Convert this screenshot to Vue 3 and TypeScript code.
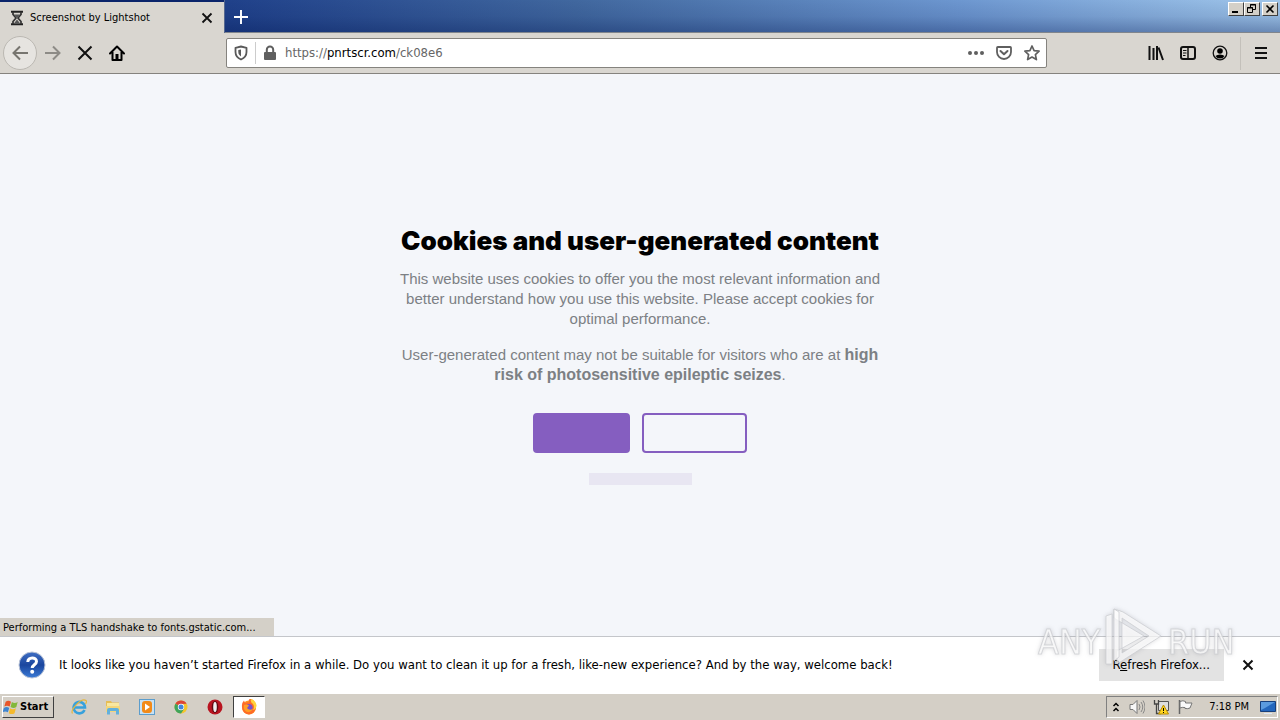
<script setup lang="ts">
interface Launcher {
  id: string
  label: string
  active: boolean
}

const launchers: Launcher[] = [
  { id: 'ie', label: 'Internet Explorer', active: false },
  { id: 'explorer', label: 'Windows Explorer', active: false },
  { id: 'media', label: 'Media Player', active: false },
  { id: 'chrome', label: 'Chrome', active: false },
  { id: 'opera', label: 'Opera', active: false },
  { id: 'firefox', label: 'Firefox', active: true },
]
</script>

<template>
  <div class="desktop">
    <header class="titlebar">
      <div class="tab">
        <svg class="icon" viewBox="0 0 16 16" aria-hidden="true">
          <path d="M2 1.800h12M2 14.200h12" stroke="#222" stroke-width="2" />
          <path d="M4 2v2.500L7 8l-3 3.500V14M12 2v2.500L9 8l3 3.500V14" fill="none" stroke="#333" stroke-width="1.700" />
          <path d="M5 4.500h6L8 8zM4.500 14L8 9.500l3.500 4.500z" fill="#555" />
        </svg>
        <span class="tab-title">Screenshot by Lightshot</span>
        <button class="plain" type="button" aria-label="Close tab">
          <svg class="icon" viewBox="0 0 16 16"><path d="M3.500 3.500l9 9M12.500 3.500l-9 9" stroke="#111" stroke-width="1.800" /></svg>
        </button>
      </div>
      <button class="new-tab" type="button" aria-label="New tab">
        <svg class="icon" viewBox="0 0 16 16"><path d="M8 0v16M0 8h16" stroke="#fff" stroke-width="2.200" /></svg>
      </button>
      <div class="window-buttons">
        <button type="button" aria-label="Minimize"><svg viewBox="0 0 12 10"><path d="M2 8h6" stroke="#000" stroke-width="2" /></svg></button>
        <button type="button" aria-label="Restore"><svg viewBox="0 0 12 10"><path d="M4.500 3V.5h5v5H7M4 1h6M1.500 3.500h5v5h-5zM1 4h6" fill="none" stroke="#000" /></svg></button>
        <button class="window-close" type="button" aria-label="Close"><svg viewBox="0 0 12 10"><path d="M2.500 1.500l7 7M9.500 1.500l-7 7" stroke="#000" stroke-width="1.600" /></svg></button>
      </div>
    </header>

    <nav class="toolbar">
      <div class="nav-buttons">
        <button class="back" type="button" aria-label="Back">
          <svg class="icon" viewBox="0 0 16 16"><path d="M16 8H1.500M8 1.500L1.500 8 8 14.500" fill="none" stroke="#77756f" stroke-width="2" /></svg>
        </button>
        <button class="plain" type="button" aria-label="Forward">
          <svg class="icon" viewBox="0 0 16 16"><path d="M0 8h14.500M8 1.500L14.500 8 8 14.500" fill="none" stroke="#8d8b86" stroke-width="2" /></svg>
        </button>
        <button class="plain" type="button" aria-label="Stop">
          <svg class="icon" viewBox="0 0 16 16"><path d="M1.500 1.500l13 13M14.500 1.500l-13 13" stroke="#111" stroke-width="2" /></svg>
        </button>
        <button class="plain" type="button" aria-label="Home">
          <svg class="icon" viewBox="0 0 16 16"><path d="M1 8.500L8 1.500l7 7M3.500 7v8h9V7" fill="none" stroke="#000" stroke-width="2" stroke-linejoin="round" stroke-linecap="round" /><path d="M6.500 9h3v6h-3z" /></svg>
        </button>
      </div>
      <div class="address">
        <svg class="icon" viewBox="0 0 16 16" aria-hidden="true"><path d="M8 1.500l5.500 1.300V7c0 3.500-2 6-5.500 7.500C4.500 13 2.500 10.500 2.500 7V2.800z" fill="none" stroke="#5a5a5a" stroke-width="1.800" stroke-linejoin="round" /><path d="M8 4.500v7C6.300 10.300 5.300 9 5.300 7V5z" fill="#5a5a5a" /></svg>
        <span class="address-divider"></span>
        <svg class="icon" viewBox="0 0 16 16" aria-hidden="true"><path d="M4.800 8V4.800a3.200 3.200 0 0 1 6.400 0V8" fill="none" stroke="#5f5f5f" stroke-width="2" /><rect x="2" y="7" width="12" height="8" rx="1" fill="#5f5f5f" /></svg>
        <a class="url" href="#"><span>https://</span><b>pnrtscr.com</b><span>/ck08e6</span></a>
        <button class="plain" type="button" aria-label="Page actions">
          <svg class="icon" viewBox="0 0 16 16"><g fill="#5f5f5f"><circle cx="2" cy="8" r="2" /><circle cx="8" cy="8" r="2" /><circle cx="14" cy="8" r="2" /></g></svg>
        </button>
        <button class="plain" type="button" aria-label="Save to Pocket">
          <svg class="icon" viewBox="0 0 16 16"><path d="M1.800 2h12.400q.8 0 .8.800V7a7 7 0 0 1-14 0V2.800Q1 2 1.800 2z" fill="none" stroke="#5f5f5f" stroke-width="1.800" /><path d="M4.500 6L8 9.300 11.500 6" fill="none" stroke="#5f5f5f" stroke-width="2" stroke-linecap="round" stroke-linejoin="round" /></svg>
        </button>
        <button class="plain" type="button" aria-label="Bookmark">
          <svg class="icon" viewBox="0 0 16 16"><path d="M8 1l2.100 4.600 5 .6-3.700 3.400 1 5L8 12.100l-4.400 2.500 1-5L.9 6.200l5-.6z" fill="none" stroke="#5f5f5f" stroke-width="1.700" stroke-linejoin="round" /></svg>
        </button>
      </div>
      <div class="tools">
        <button class="plain" type="button" aria-label="Library">
          <svg class="icon" viewBox="0 0 16 16"><path d="M1.500 1v14M5.500 3v12M9 1v14M10.500 2.500L15 15" stroke="#111" stroke-width="2" /></svg>
        </button>
        <button class="plain" type="button" aria-label="Sidebars">
          <svg class="icon" viewBox="0 0 16 16"><rect x="1" y="2" width="14" height="12" rx="2" fill="none" stroke="#111" stroke-width="2" /><path d="M8 2v12" stroke="#111" stroke-width="1.500" /><path d="M3 5.500h3.500M3 8h3.500M3 10.500h2.500" stroke="#111" /></svg>
        </button>
        <button class="plain" type="button" aria-label="Account">
          <svg class="icon" viewBox="0 0 16 16"><circle cx="8" cy="8" r="6.800" fill="none" stroke="#111" stroke-width="1.300" /><circle cx="8" cy="6" r="2.800" /><path d="M3.500 11Q5 9.500 8 9.500t4.500 1.500Q11 13.500 8 13.500t-4.500-2.500z" /></svg>
        </button>
        <span class="tools-divider"></span>
        <button class="plain" type="button" aria-label="Menu">
          <svg class="icon" viewBox="0 0 16 16"><path d="M2 3h12M2 8h12M2 13h12" stroke="#111" stroke-width="2" /></svg>
        </button>
      </div>
    </nav>

    <main class="page">
      <section class="consent">
        <h1>Cookies and user-generated content</h1>
        <p>This website uses cookies to offer you the most relevant information and better understand how you use this website. Please accept cookies for optimal performance.</p>
        <p>User-generated content may not be suitable for visitors who are at <strong>high risk of photosensitive epileptic seizes</strong>.</p>
        <div class="choices">
          <button class="accept" type="button" aria-label="Accept"></button>
          <button class="decline" type="button" aria-label="Decline"></button>
        </div>
        <div class="policy"></div>
      </section>
      <div class="status">Performing a TLS handshake to fonts.gstatic.com...</div>
    </main>

    <aside class="notice">
      <svg class="help" viewBox="0 0 28 28" aria-hidden="true">
        <defs><linearGradient id="help-blue" x2="0" y2="1"><stop stop-color="#3f6fc4" /><stop offset=".5" stop-color="#1b469e" /><stop offset="1" stop-color="#3b7bd6" /></linearGradient></defs>
        <circle cx="14" cy="14" r="13" fill="url(#help-blue)" stroke="#b9c3d6" />
        <path d="M9.800 11c0-5.300 8.700-5.300 8.700-.6 0 3.300-4.300 3.300-4.300 6.600" fill="none" stroke="#fff" stroke-width="3" /><circle cx="14.200" cy="20.800" r="2" fill="#fff" />
      </svg>
      <p>It looks like you haven’t started Firefox in a while. Do you want to clean it up for a fresh, like-new experience? And by the way, welcome back!</p>
      <button class="refresh" type="button">R<u>e</u>fresh Firefox...</button>
      <button class="plain" type="button" aria-label="Dismiss">
        <svg class="icon" viewBox="0 0 16 16"><path d="M3.500 3.500l9 9M12.500 3.500l-9 9" stroke="#111" stroke-width="2" /></svg>
      </button>
      <svg class="watermark" viewBox="0 0 204 64" aria-hidden="true">
        <g fill="#fff" fill-opacity=".7" stroke="#c9cacf" stroke-opacity=".7">
          <text x="6" y="50">ANY</text>
          <text x="136" y="50">RUN</text>
          <path fill-rule="evenodd" d="M82 5l9 3 38 24-44 28V47l27-15-30-18zM90 14v35l27-17z" />
          <path d="M74 12l6-2v50h-6zM82 5l5 3v45l-5 4z" />
        </g>
      </svg>
    </aside>

    <footer class="taskbar">
      <button class="start" type="button">
        <svg viewBox="0 0 18 16" aria-hidden="true"><path d="M3 2q3-2 6 0L7.500 7.500q-3-2-6 0z" fill="#e8562a" /><path d="M10 2.500q3 2 6.500 0L15 8q-3 2-6.500 0z" fill="#82b83a" /><path d="M1 9q3-2 6 0L5.500 14q-3-2-6 0z" fill="#3e85d0" /><path d="M8 9.500q3 2 6.500 0L13 15q-3 2-6.500 0z" fill="#f4b92c" /></svg>
        Start
      </button>
      <button v-for="item in launchers" :key="item.id" class="launcher" :class="{ active: item.active }" type="button" :aria-label="item.label">
        <svg v-if="item.id === 'ie'" viewBox="0 0 16 16"><path d="M13.500 11A5.700 5.700 0 1 1 14 8.500H4" fill="none" stroke="#37a1dc" stroke-width="2.600" /><path d="M1.500 14.500C-1 11 10-1.500 15 1.500c1 .8.300 2.500-.5 3.500" fill="none" stroke="#e4b63f" stroke-width="1.200" /></svg>
        <svg v-else-if="item.id === 'explorer'" viewBox="0 0 16 16"><path d="M1 2h5l1 1.500h7V13H1z" fill="#e6bd55" /><path d="M2 4h12v8H2z" fill="#f8e7a0" /><path d="M1 7h14v6H1z" fill="#f3d67b" /><path d="M2 15.500V11q0-2 2-2h8q2 0 2 2v4.500h-3V12H5v3.500z" fill="#62b0dc" /></svg>
        <svg v-else-if="item.id === 'media'" viewBox="0 0 16 16"><rect x=".5" y=".5" width="15" height="15" fill="#c7e1f4" stroke="#5c9dcc" /><rect x="3" y="2" width="10" height="12" rx="3" fill="#f28a18" /><path d="M6 4.500L11 8l-5 3.500z" fill="#fff" /></svg>
        <svg v-else-if="item.id === 'chrome'" viewBox="0 0 16 16"><circle cx="8" cy="8" r="6.500" fill="#f4c52c" /><path d="M8 8L2.400 4.700A6.500 6.500 0 0 1 13.600 4.700L8 5z" fill="#dc4437" /><path d="M2.400 4.700A6.500 6.500 0 0 0 8 14.500l3-4.500-3-2z" fill="#3fa45b" /><circle cx="8" cy="8" r="3.200" fill="#fff" /><circle cx="8" cy="8" r="2.500" fill="#4285dc" /></svg>
        <svg v-else-if="item.id === 'opera'" viewBox="0 0 16 16"><circle cx="8" cy="8" r="7.500" fill="#b91420" /><ellipse cx="8" cy="8" rx="3.300" ry="6" fill="#5e0911" /><ellipse cx="8" cy="8" rx="1.800" ry="5" fill="#eee" /></svg>
        <svg v-else viewBox="0 0 16 16"><circle cx="8" cy="8.500" r="7" fill="#ff9822" /><path d="M1 8Q.5 4 3 1.500L4 4q2-1 4-.5Q7-.5 10 0q5 2 5 8-1 7-7 7.500Q1.500 15 1 8z" fill="#ff6b27" /><path d="M10 0q-1 3 2 5 2 3 0 6 4-1 3.500-5Q14 1 10 0z" fill="#ffd33a" /><circle cx="8" cy="8.500" r="3.600" fill="#7751c9" /><path d="M3 6q3-1 5 .5L6 9q2 3 6 1-3 5-7 2.500Q2 10 3 6z" fill="#ff9f24" /></svg>
      </button>
      <div class="tray">
        <svg class="chevrons" viewBox="0 0 8 12" aria-hidden="true"><path d="M1.500 5L4 2.500 6.500 5M1.500 10L4 7.500 6.500 10" fill="none" stroke="#000" stroke-width="1.500" /></svg>
        <svg class="icon" viewBox="0 0 16 16" aria-hidden="true"><path d="M1 5.500h3L8 1.500v13l-4-4H1z" fill="#f7f7f7" stroke="#777" /><path d="M10 5q2 3 0 6M12 3q3.500 5 0 10M14 1.500q4 6.500 0 13" fill="none" stroke="#888" /></svg>
        <svg class="icon" viewBox="0 0 16 16" aria-hidden="true"><path d="M5.500 2.500h10v9h-10z" fill="#dedede" stroke="#555" /><path d="M1.500 1v4h4V1M3.500 5v9.500H8" fill="none" stroke="#444" stroke-width="1.300" /><path d="M10.500 6l5 9h-10z" fill="#ffd51f" stroke="#b98c00" /><path d="M10.500 9v3M10.500 13v1" stroke="#000" /></svg>
        <svg class="icon" viewBox="0 0 16 16" aria-hidden="true"><path d="M2.500 1v14" stroke="#666" stroke-width="1.500" /><path d="M3 2.500q3-1.500 5.500 0v1.500H15L13 9q-2 1-5 .5V8.500Q5 8 3 9z" fill="#fafafa" stroke="#777" /></svg>
        <time>7:18 PM</time>
        <svg class="icon" viewBox="0 0 16 16" aria-hidden="true"><path d="M.5 2.500h15v10H.5z" fill="#2467bd" stroke="#173f7c" /><path d="M1 3h14L5 9l-4 2z" fill="#5b9bdf" /><path d="M4 14.500h8" stroke="#dfe9f5" /></svg>
      </div>
    </footer>
  </div>
</template>

<style>
body {
  margin: 0;
}
</style>

<style scoped>
.desktop {
  display: flex;
  flex-direction: column;
  min-height: 100vh;
  font: 11px/16px "DejaVu Sans Condensed", "DejaVu Sans", sans-serif;
  color: #000;
  background: #f4f6fa;
}

button {
  font: inherit;
  color: inherit;
  box-sizing: border-box;
  margin: 0;
  padding: 0;
}

svg {
  display: block;
  flex: none;
}

.icon {
  width: 16px;
  height: 16px;
}

.plain {
  display: block;
  border: 0;
  background: none;
}

.titlebar {
  display: flex;
  height: 33px;
  background: linear-gradient(rgba(0, 20, 80, 0), rgba(0, 20, 80, 0.1) 50%, rgba(0, 20, 80, 0.35)), linear-gradient(90deg, #20418a 18%, #41689f 45%, #6d97d0 75%, #a0c6ea);
  box-shadow: inset 0 -1px #80858c;
}

.tab {
  display: flex;
  align-items: center;
  gap: 5px;
  box-sizing: border-box;
  width: 224px;
  padding: 0 9px;
  border-top: 2px solid #0a246a;
  background: #d9d6d0;
}

.tab-title {
  flex: 1;
}

.new-tab {
  display: flex;
  align-items: center;
  padding: 0 9px;
  border: 0;
  border-left: 1px solid #56688f;
  background: none;
}

.new-tab .icon {
  width: 14px;
  height: 14px;
}

.window-buttons {
  display: flex;
  align-items: flex-start;
  margin-left: auto;
  padding: 2px 2px 0 0;
}

.window-buttons button {
  width: 16px;
  height: 14px;
  border: 1px solid;
  border-color: #fff #404040 #404040 #fff;
  background: #d4d0c8;
}

.window-buttons .window-close {
  margin-left: 2px;
}

.window-buttons svg {
  width: 12px;
  height: 10px;
  margin: auto;
}

.toolbar {
  display: flex;
  align-items: center;
  height: 40px;
  border-bottom: 1px solid #85837e;
  background: #d9d6d0;
}

.nav-buttons {
  display: flex;
  flex: none;
  align-items: center;
  gap: 16px;
  padding-left: 3px;
}

.back {
  display: grid;
  place-items: center;
  width: 34px;
  height: 34px;
  margin-right: -8px;
  border: 1px solid #bbb8b2;
  border-radius: 50%;
  background: #e6e4e0;
}

.address {
  display: flex;
  flex: 1;
  align-items: center;
  gap: 12px;
  box-sizing: border-box;
  height: 30px;
  margin: 0 101px;
  padding: 0 6px;
  border: 1px solid #85837e;
  border-radius: 2px;
  background: #fff;
}

.address-divider {
  width: 1px;
  height: 22px;
  margin: 0 -6px;
  background: #ccc;
}

.url {
  flex: 1;
  margin-left: -5px;
  font-size: 13px;
  color: #666;
  text-decoration: none;
}

.url b {
  font-weight: normal;
  color: #000;
}

.tools {
  display: flex;
  flex: none;
  align-items: center;
  gap: 16px;
  padding-right: 11px;
}

.tools-divider {
  width: 1px;
  height: 33px;
  margin: 0 -4px;
  background: #c3c0ba;
}

.page {
  position: relative;
  display: flex;
  flex: 1;
  flex-direction: column;
  align-items: center;
  justify-content: center;
  background: #f4f6fa;
}

.consent {
  width: 500px;
  max-width: 100%;
  text-align: center;
  font: 15px/20px "Liberation Sans", Arial, sans-serif;
  color: #7c8084;
}

.consent strong {
  font-size: 16px;
  line-height: 16px;
}

h1 {
  margin: 0 0 12px;
  font: 900 26px/32px Inter, "Liberation Sans", sans-serif;
  white-space: nowrap;
  color: #000;
}

.consent p {
  margin: 0 0 16px;
}

.choices {
  display: flex;
  justify-content: center;
  gap: 12px;
  margin-top: 28px;
}

.choices button {
  height: 40px;
  border: 2px solid #855ec0;
  border-radius: 4px;
}

.accept {
  width: 97px;
  background: #855ec0;
}

.decline {
  width: 105px;
  background: transparent;
}

.policy {
  width: 103px;
  height: 12px;
  margin: 20px auto 0;
  background: #e8e6f2;
}

.status {
  position: absolute;
  bottom: 0;
  left: 0;
  box-sizing: border-box;
  width: 274px;
  height: 18px;
  padding: 2px 3px 0;
  white-space: nowrap;
  background: #d4d0c8;
}

.notice {
  position: relative;
  display: flex;
  align-items: center;
  height: 56px;
  padding: 0 24px 0 18px;
  border-top: 1px solid #c4c6ca;
  background: #fff;
}

.help {
  width: 28px;
  height: 28px;
}

.notice p {
  flex: 1;
  margin: 0 0 0 13px;
  font-size: 13px;
}

.refresh {
  height: 32px;
  margin-right: 16px;
  padding: 0 14px;
  border: 0;
  font-size: 13px;
  background: #e3e3e3;
}

.watermark {
  position: absolute;
  right: 44px;
  bottom: 25px;
  width: 204px;
  height: 64px;
  pointer-events: none;
  filter: drop-shadow(0 0 2px rgba(100, 100, 110, 0.3));
}

.watermark text {
  font: 34px "DejaVu Sans Condensed", "DejaVu Sans", sans-serif;
}

.taskbar {
  display: flex;
  align-items: center;
  height: 26px;
  border-top: 1px solid #fff;
  background: #d4cfc6;
  box-shadow: 0 -1px #b7b5b0;
}

.start {
  display: flex;
  align-items: center;
  gap: 1px;
  width: 52px;
  height: 22px;
  margin: 0 9px 0 2px;
  border: 1px solid;
  border-color: #fff #404040 #404040 #fff;
  background: #d4cfc6;
  font-weight: bold;
}

.start svg {
  width: 16px;
  height: 16px;
}

.launcher {
  display: grid;
  place-items: center;
  width: 32px;
  height: 22px;
  margin-right: 2px;
  border: 1px solid transparent;
  background: none;
}

.launcher svg {
  width: 16px;
  height: 16px;
}

.launcher.active {
  border-color: #404040 #fff #fff #404040;
  background: #fff;
}

.tray {
  display: flex;
  align-items: center;
  gap: 8px;
  box-sizing: border-box;
  height: 22px;
  margin-left: auto;
  margin-right: 2px;
  padding: 0 1px 0 4px;
  border: 1px solid;
  border-color: #808080 #fff #fff #808080;
}

.chevrons {
  width: 10px;
  height: 12px;
}

.tray time {
  margin: 0 3px 0 8px;
}
</style>
